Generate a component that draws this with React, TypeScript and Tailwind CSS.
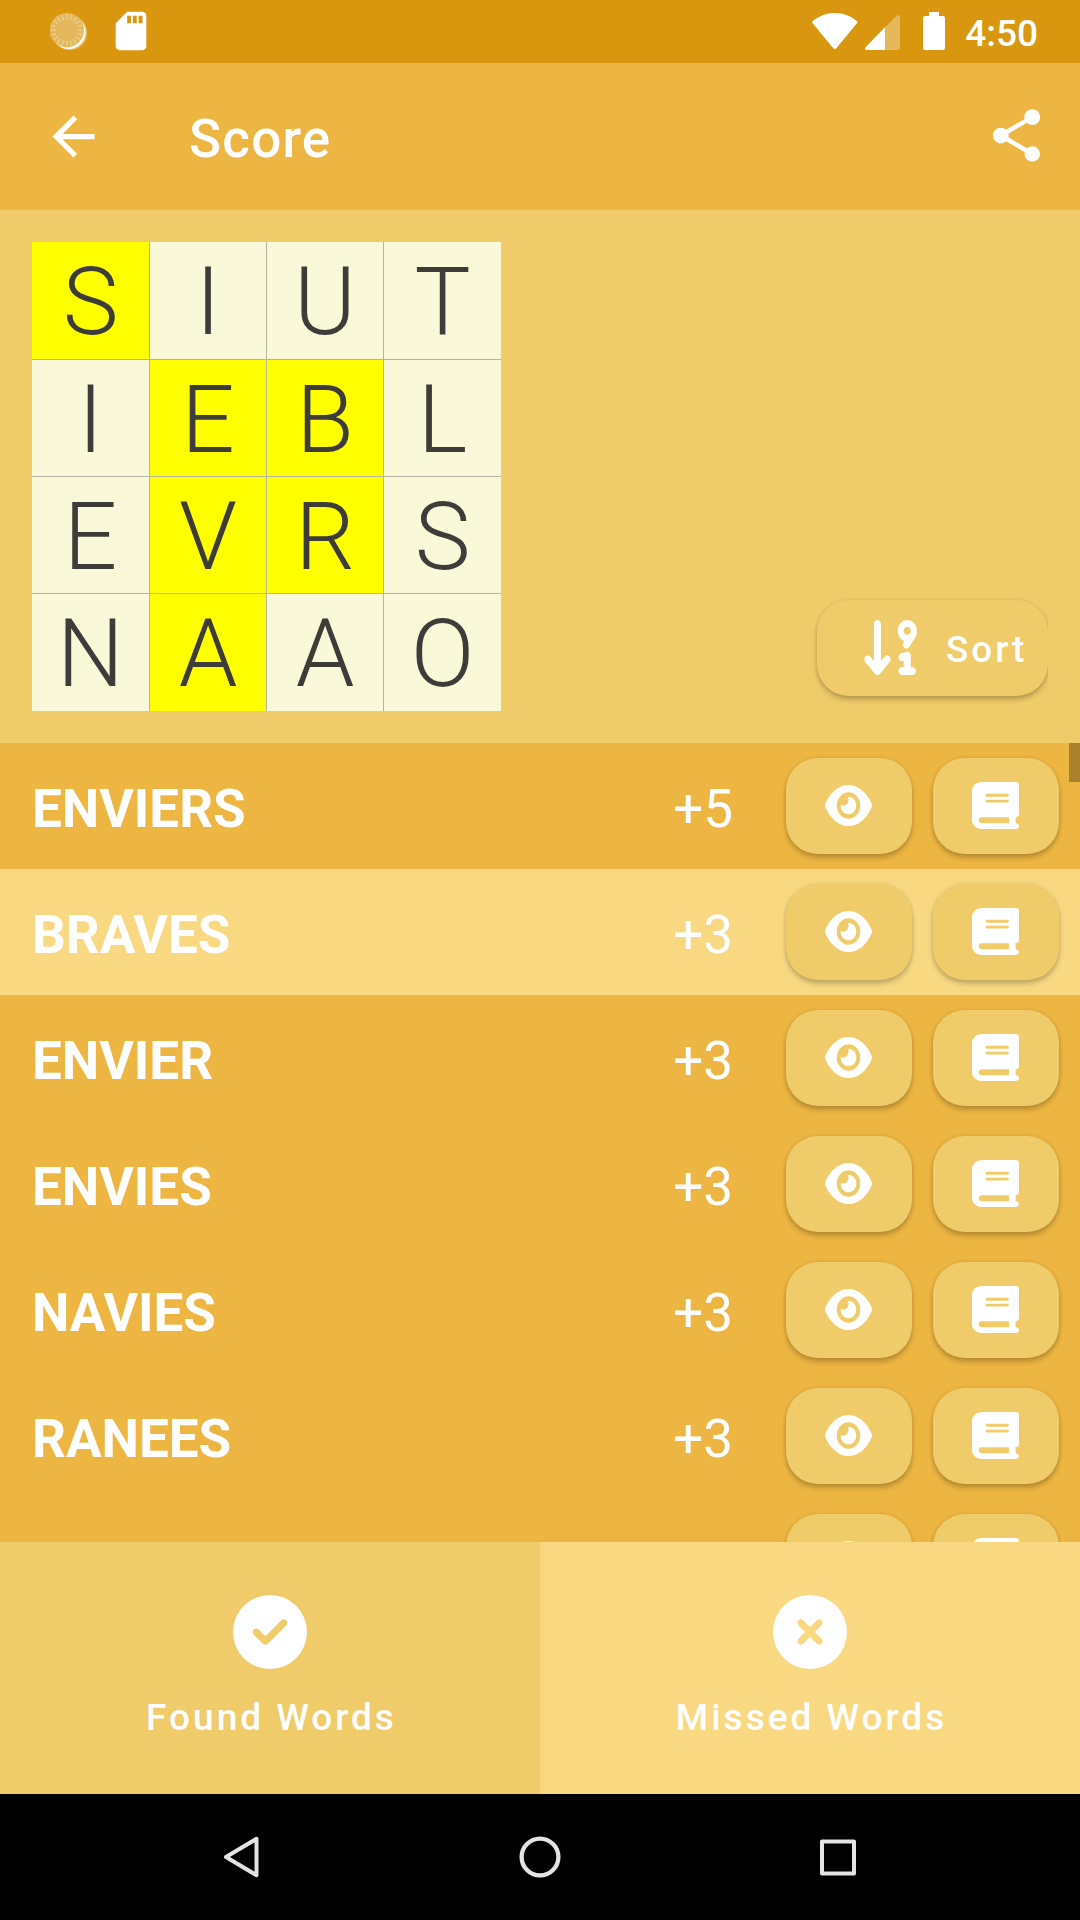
import { FaArrowDown91, FaBook, FaCircleCheck, FaCircleXmark, FaEye } from "react-icons/fa6";
import { MdArrowBack, MdSdCard, MdShare } from "react-icons/md";

type Cell = { letter: string; on?: boolean };
type Word = { text: string; points: number; selected?: boolean };

const board: Cell[] = [
  { letter: "S", on: true }, { letter: "I" }, { letter: "U" }, { letter: "T" },
  { letter: "I" }, { letter: "E", on: true }, { letter: "B", on: true }, { letter: "L" },
  { letter: "E" }, { letter: "V", on: true }, { letter: "R", on: true }, { letter: "S" },
  { letter: "N" }, { letter: "A", on: true }, { letter: "A" }, { letter: "O" },
];

const words: Word[] = [
  { text: "ENVIERS", points: 5 },
  { text: "BRAVES", points: 3, selected: true },
  { text: "ENVIER", points: 3 },
  { text: "ENVIES", points: 3 },
  { text: "NAVIES", points: 3 },
  { text: "RANEES", points: 3 },
];

const ticks = Array.from({ length: 20 }, (_, i) => i * 18);

function SyncIcon() {
  return (
    <svg width="38" height="40" viewBox="0 0 38 40">
      <circle cx="20" cy="21" r="17" fill="#fff" opacity=".45" />
      <circle cx="18.5" cy="20" r="17" fill="#fff" />
      <circle cx="16.8" cy="18.2" r="17.200" fill="#e4b75c" />
      {ticks.map((a) => (
        <path key={a} d="M16.800 2v5.400" stroke="#eccd8c" strokeWidth="1.500" transform={`rotate(${a} 16.8 18.2)`} />
      ))}
    </svg>
  );
}

function StatusBar() {
  return (
    <div className="flex h-[63px] items-start bg-[#d9970f]">
      <div className="ml-[50px] mt-3">
        <SyncIcon />
      </div>
      <MdSdCard className="ml-5 mt-2 size-[46px]" />
      <svg className="ml-auto mt-[13px]" width="46" height="37" viewBox="0 0 46 37">
        <path d="M.3 8.600C6.500 3 14.400 0 22.800 0s16.300 3 22.200 8.300c.5.500.6 1.200.2 1.700L24.300 35.300c-.8 1-2.200 1-3 0L.4 10c-.4-.400-.4-1-.1-1.400z" fill="#fff" />
      </svg>
      <svg className="ml-[7px] mt-[15px]" width="36" height="35" viewBox="0 0 36 35">
        <path d="M20 12.500 31.700.800C33-.400 35 .300 35 2v31a2 2 0 0 1-2 2H20z" fill="#e4b95c" />
        <path d="M20 12.300V35H1.500C.2 35-.5 33.400.5 32.300z" fill="#fff" />
      </svg>
      <svg className="ml-[22px] mt-3" width="22" height="38" viewBox="0 0 22 38">
        <path d="M6 0h10v4h4a2 2 0 0 1 2 2v30a2 2 0 0 1-2 2H2a2 2 0 0 1-2-2V6a2 2 0 0 1 2-2h4z" fill="#fff" />
      </svg>
      <div className="ml-5 mr-[42px] mt-4 text-[37px] font-medium leading-9">4:50</div>
    </div>
  );
}

function Header() {
  return (
    <header className="flex h-[147px] items-center bg-[#edb541] pl-[42px] pr-8">
      <MdArrowBack className="size-[63px]" />
      <h1 className="ml-[84px] mt-[5px] text-[53px] font-medium leading-none tracking-[1.2px]">Score</h1>
      <MdShare className="ml-auto size-[63px] -mt-0.5" />
    </header>
  );
}

function Board() {
  return (
    <div className="grid size-[469px] grid-cols-[117px_116px_116px_117px] grid-rows-[117px_116px_116px_117px] gap-px bg-[#b4b4a0]">
      {board.map((c, i) => (
        <div
          key={i}
          className={`flex items-center justify-center pt-[3px] text-[94px] font-light leading-none text-[#3e3c39] ${c.on ? "bg-[#ffff00]" : "bg-[#f9f8d8]"}`}
        >
          {c.letter}
        </div>
      ))}
    </div>
  );
}

function ActionButton({ icon }: { icon: "eye" | "book" }) {
  const Icon = icon === "eye" ? FaEye : FaBook;
  return (
    <button className="flex h-24 w-[126px] items-center justify-center rounded-[32px] bg-[#efcb69] pb-px pr-px shadow-[0_4px_5px_rgba(0,0,0,0.2),0_0_4px_rgba(0,0,0,0.1)]">
      <Icon className="size-[47px]" preserveAspectRatio="none" />
    </button>
  );
}

function WordRow({ word }: { word: Word }) {
  return (
    <div className={`flex h-[126px] shrink-0 items-center pl-8 pr-[21px] text-[53px] leading-none ${word.selected ? "bg-[#f8d982]" : ""}`}>
      <div className="mt-[7px] grow font-bold">{word.text}</div>
      <div className="mr-[53px] mt-[7px]">+{word.points}</div>
      <div className="flex gap-[21px]">
        <ActionButton icon="eye" />
        <ActionButton icon="book" />
      </div>
    </div>
  );
}

export default function App() {
  return (
    <div className="flex h-[1920px] w-[1080px] flex-col overflow-hidden bg-[#edb541] font-['Roboto',sans-serif] text-white">
      <StatusBar />
      <Header />
      <section className="flex h-[533px] items-end justify-between bg-[#efcb69] p-8">
        <Board />
        <div className="overflow-hidden pb-[15px] pl-2 pt-2">
          <button className="flex h-24 w-[231px] items-center rounded-[32px] bg-[#efcb69] pl-[43px] shadow-[0_4px_5px_rgba(0,0,0,0.2),0_0_4px_rgba(0,0,0,0.1)]">
            <FaArrowDown91 className="-mt-px size-[63px]" preserveAspectRatio="none" />
            <span className="ml-[23px] mt-[3px] text-[37px] font-medium leading-none tracking-[2.9px]">Sort</span>
          </button>
        </div>
      </section>
      <main className="relative flex h-[799px] flex-col overflow-hidden">
        {words.map((w) => (
          <WordRow key={w.text} word={w} />
        ))}
        <div className="flex h-[126px] shrink-0 items-center justify-end gap-[21px] pr-[21px]">
          <ActionButton icon="eye" />
          <ActionButton icon="book" />
        </div>
        <div className="absolute right-0 top-0 h-[39px] w-[11px] bg-[#aa822d]" />
      </main>
      <div className="grid h-[252px] grid-cols-2 text-[37px] font-medium leading-none tracking-[3px]">
        <div className="flex flex-col items-center gap-[30px] bg-[#efcb69] pt-[53px]">
          <FaCircleCheck className="size-[74px]" />
          <span className="pl-[3px]">Found Words</span>
        </div>
        <div className="flex flex-col items-center gap-[30px] bg-[#f8d982] pt-[53px]">
          <FaCircleXmark className="size-[74px]" />
          <span className="pl-[3px]">Missed Words</span>
        </div>
      </div>
      <nav className="flex h-[126px] items-center justify-between bg-black pl-[223px] pr-[224px]">
        <svg width="37" height="42" viewBox="0 0 37 42" fill="none" stroke="#e4e4e4" strokeWidth="4" strokeLinejoin="round">
          <path d="M33.500 2.800v36.400L3 21z" />
        </svg>
        <svg width="42" height="42" viewBox="0 0 42 42" fill="none" stroke="#e4e4e4" strokeWidth="4.300">
          <circle cx="21" cy="21" r="18.400" />
        </svg>
        <svg width="37" height="37" viewBox="0 0 37 37" fill="none" stroke="#e4e4e4" strokeWidth="4" strokeLinejoin="round">
          <path d="M3 2.500h32v32H3z" />
        </svg>
      </nav>
    </div>
  );
}
